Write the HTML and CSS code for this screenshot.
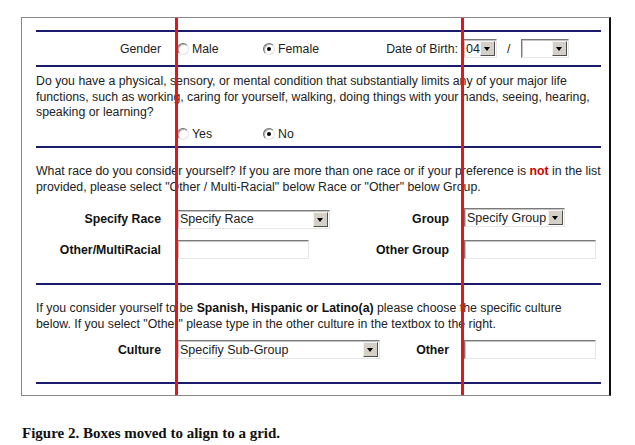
FILE: index.html
```html
<!DOCTYPE html>
<html lang="en">
  <head>
    <meta charset="UTF-8" />
    <title>Boxes aligned to a grid</title>
    <link rel="stylesheet" href="styles.css">
  </head>
  <body>
    <div class="frame">
      <div class="rule"></div>

      <div class="sec sec-gender">
        <div class="row">
          <span class="lbl">Gender</span>
          <span class="opts">
            <span class="opt"><span class="radio"></span>Male</span>
            <span class="opt"><span class="radio on"></span>Female</span>
          </span>
          <span class="lbl2 dob">Date of Birth:</span>
          <span class="dates">
            <span class="sel w-day"><span class="val">04</span><span class="btn"></span></span>
            <span class="slash">/</span>
            <span class="sel w-month"><span class="val"></span><span class="btn"></span></span>
          </span>
        </div>
      </div>

      <div class="rule"></div>

      <div class="sec sec-cond">
        <p>Do you have a physical, sensory, or mental condition that substantially limits any of your major life<br>functions, such as working, caring for yourself, walking, doing things with your hands, seeing, hearing,<br>speaking or learning?</p>
        <div class="row yesno">
          <span class="lbl"></span>
          <span class="opts">
            <span class="opt"><span class="radio"></span>Yes</span>
            <span class="opt"><span class="radio on"></span>No</span>
          </span>
        </div>
      </div>

      <div class="rule"></div>

      <div class="sec sec-race">
        <p>What race do you consider yourself? If you are more than one race or if your preference is <b class="red">not</b> in the list<br>provided, please select "Other / Multi-Racial" below Race or "Other" below Group.</p>
        <div class="row first">
          <b class="lbl">Specify Race</b>
          <span><span class="sel w-race"><span class="val">Specify Race</span><span class="btn"></span></span></span>
          <b class="lbl2">Group</b>
          <span class="up"><span class="sel w-group"><span class="val">Specify Group</span><span class="btn"></span></span></span>
        </div>
        <div class="row second">
          <b class="lbl">Other/MultiRacial</b>
          <span><span class="txt w-multi"></span></span>
          <b class="lbl2">Other Group</b>
          <span><span class="txt w-wide"></span></span>
        </div>
      </div>

      <div class="rule"></div>

      <div class="sec sec-culture">
        <p>If you consider yourself to be <b>Spanish, Hispanic or Latino(a)</b> please choose the specific culture<br>below. If you select "Other" please type in the other culture in the textbox to the right.</p>
        <div class="row first">
          <b class="lbl">Culture</b>
          <span><span class="sel w-culture"><span class="val">Specifiy Sub-Group</span><span class="btn"></span></span></span>
          <b class="lbl2">Other</b>
          <span><span class="txt w-wide"></span></span>
        </div>
      </div>

      <div class="rule"></div>

      <div class="guide g1"></div>
      <div class="guide g2"></div>
    </div>

    <p class="caption">Figure 2. Boxes moved to align to a grid.</p>
  </body>
</html>
```

FILE: styles.css
```css
body {
  margin: 0;
  font-family: "Liberation Sans", Arial, sans-serif;
  font-size: 12.3px;
  color: #222;
  background: #fff;
}
.frame {
  position: relative;
  width: 565px;
  margin: 17px 0 0 21px;
  padding: 12px 8px 11px 14px;
  border: 1px solid #888;
  border-right: 2px solid #111;
}
.rule {
  height: 2px;
  background: #1b1b6b;
}
.sec {
  box-sizing: border-box;
}
.sec p {
  margin: 0;
  line-height: 15.5px;
  white-space: nowrap;
}
.sec-gender {
  height: 33px;
  padding-top: 7px;
}
.sec-cond {
  height: 79px;
  padding-top: 7px;
}
.sec-race {
  height: 135px;
  padding-top: 16px;
}
.sec-culture {
  height: 97px;
  padding-top: 16px;
}
.row {
  display: grid;
  grid-template-columns: 140px 200px 87px 138px;
  grid-template-rows: 100%;
  align-items: center;
  height: 19px;
}
.yesno {
  margin-top: 5px;
  height: 16px;
}
.sec-race .first {
  margin-top: 13px;
  height: 22px;
}
.sec-race .second {
  margin-top: 10px;
}
.sec-culture .first {
  margin-top: 8px;
}
.up {
  align-self: start;
}
.lbl {
  text-align: right;
  padding-right: 15px;
  white-space: nowrap;
}
.lbl2 {
  text-align: right;
  padding-right: 14px;
  white-space: nowrap;
}
.dob {
  padding-right: 5px;
}
b {
  font-weight: bold;
  color: #111;
}
.red {
  color: #c00;
}
.opts {
  display: flex;
  padding-left: 1px;
}
.opt {
  display: flex;
  align-items: center;
  width: 86px;
}
.radio {
  box-sizing: border-box;
  width: 12px;
  height: 12px;
  margin-right: 3px;
  border-radius: 50%;
  border: 1px solid;
  border-color: #707070 #e2e2e2 #e2e2e2 #707070;
  background: #fff;
  box-shadow: inset 1px 1px 0 #b0b0b0;
  position: relative;
}
.radio.on::after {
  content: "";
  position: absolute;
  left: 3px;
  top: 3px;
  width: 4px;
  height: 4px;
  border-radius: 50%;
  background: #000;
}
.dates {
  display: flex;
  align-items: center;
}
.slash {
  margin: 0 11px 0 10px;
}
.sel,
.txt {
  box-sizing: border-box;
  display: inline-flex;
  align-items: center;
  height: 19px;
  margin-left: 1px;
  border: 1px solid;
  border-color: #7a7a7a #e6e6e6 #e6e6e6 #7a7a7a;
  box-shadow: inset 1px 1px 0 #c4c4c4;
  background: #fff;
  vertical-align: middle;
}
.dates .sel {
  margin-left: 0;
}
.val {
  flex: 1;
  padding-left: 2px;
  font-size: 12.5px;
  color: #222;
  white-space: nowrap;
}
.btn {
  flex: none;
  position: relative;
  box-sizing: border-box;
  width: 15px;
  height: 15px;
  margin-right: 1px;
  background: #d4d0c8;
  border: 1px solid;
  border-color: #f4f4f4 #505050 #505050 #f4f4f4;
}
.btn::after {
  content: "";
  position: absolute;
  left: 3px;
  top: 5px;
  border-left: 3.5px solid transparent;
  border-right: 3.5px solid transparent;
  border-top: 4px solid #000;
}
.w-day { width: 34px; }
.w-month { width: 48px; }
.w-race { width: 153px; }
.w-group { width: 101px; }
.w-culture { width: 203px; }
.w-multi { width: 132px; }
.w-wide { width: 132px; }
.guide {
  position: absolute;
  top: 0;
  bottom: 0;
  width: 3px;
  background: #e8141c;
}
.g1 { left: 153px; }
.g2 { left: 439px; }
.caption {
  margin: 29px 0 0 22px;
  font-family: "Liberation Serif", "Times New Roman", serif;
  font-weight: bold;
  font-size: 15px;
  color: #111;
}
```
